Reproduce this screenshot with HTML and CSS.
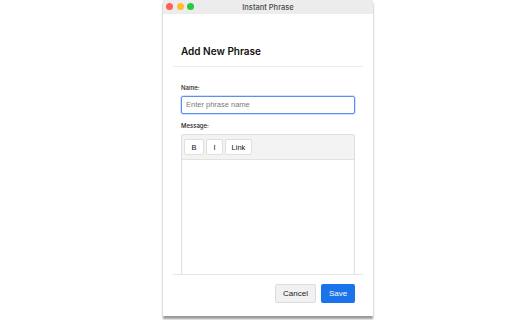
FILE: index.html
```html
<!DOCTYPE html>
<html>
<head>
<meta charset="utf-8">
<link rel="stylesheet" href="styles.css">
</head>
<body>
<div class="desktop">
  <div class="window">
    <div class="titlebar">
      <div class="lights">
        <span class="light red"></span>
        <span class="light yellow"></span>
        <span class="light green"></span>
      </div>
      <div class="title">Instant Phrase</div>
    </div>
    <div class="content">
      <div class="header">
        <h1 class="heading">Add New Phrase</h1>
      </div>
      <div class="body">
        <label class="label">Name:</label>
        <div class="input">Enter phrase name</div>
        <label class="label label-msg">Message:</label>
        <div class="editor">
          <div class="toolbar">
            <span class="tbtn tb-b">B</span>
            <span class="tbtn tb-i">I</span>
            <span class="tbtn tb-link">Link</span>
          </div>
          <div class="editarea"></div>
        </div>
      </div>
      <div class="footer">
        <span class="btn cancel">Cancel</span>
        <span class="btn save">Save</span>
      </div>
    </div>
  </div>
</div>
</body>
</html>
```
FILE: styles.css
```css
* { box-sizing: border-box; margin: 0; padding: 0; }
html, body { width: 512px; height: 320px; overflow: hidden; background: #ffffff; }
body { font-family: "Liberation Sans", Arial, sans-serif; }
.desktop { position: relative; width: 512px; height: 320px; }
.window {
  position: absolute;
  left: 163px; top: 0;
  width: 210px; height: 316px;
  background: #ffffff;
  box-shadow: 0 3px 2px rgba(0,0,0,0.4);
  display: flex; flex-direction: column;
  overflow: hidden;
}
.titlebar {
  height: 14px; background: #ececec;
  position: relative;
  display: flex; align-items: center; justify-content: center;
  flex: none;
}
.lights { position: absolute; left: 3px; top: 3px; display: flex; gap: 3.5px; }
.light { width: 7px; height: 7px; border-radius: 50%; display: block; }
.red { background: #fe5f57; }
.yellow { background: #febc2e; }
.green { background: #28c840; }
.title { font-family: "Inter", "Liberation Sans", sans-serif; font-size: 7.5px; color: #4a4a4a; font-weight: 500; }
.content { flex: 1; display: flex; flex-direction: column; padding: 0 10px; position: relative; }
.header { padding: 31px 8px 9px; border-bottom: 1px solid #ebebeb; }
.heading { font-family: "Inter", "Liberation Sans", sans-serif; font-size: 10px; font-weight: 600; color: #111; line-height: 12px; }
.body { padding: 17px 8px 0; flex: 1; overflow: hidden; }
.label { display: block; font-family: "Inter", "Liberation Sans", sans-serif; font-size: 6px; font-weight: 500; color: #222; line-height: 8px; }
.input {
  margin-top: 4px; height: 18px;
  border: 1px solid #5b8ff0; border-radius: 2px;
  box-shadow: 0 0 0 0.5px #a9c3f5;
  font-size: 7.5px; color: #7a7a7a; padding-left: 4px; line-height: 16px;
}
.label-msg { margin-top: 8px; }
.editor {
  margin-top: 4px; height: 150px;
  border: 1px solid #dedede; border-radius: 2px;
}
.toolbar {
  height: 25px; background: #f3f3f3; border-bottom: 1px solid #e2e2e2;
  display: flex; align-items: center; gap: 2px; padding-left: 2px;
}
.tbtn {
  height: 16px; background: #fff; border: 1px solid #e0e0e0; border-radius: 2px;
  font-size: 7.5px; color: #111; display: flex; align-items: center; justify-content: center;
  font-family: "Liberation Sans", Arial, sans-serif;
}
.tb-b { width: 20px; }
.tb-i { width: 17px; }
.tb-link { width: 27px; }
.footer {
  position: absolute; left: 10px; right: 10px; top: 260px; bottom: 0;
  background: #fff; border-top: 1px solid #e6e6e6;
  display: flex; justify-content: flex-end; align-items: flex-start;
  padding: 9px 8px 0; gap: 5px;
}
.btn {
  height: 19px; border-radius: 2px; font-size: 8px;
  display: flex; align-items: center; justify-content: center;
}
.cancel { width: 41px; background: #f1f1f3; border: 1px solid #dcdcdc; color: #222; }
.save { width: 34px; background: #1a73e8; color: #fff; }
```
